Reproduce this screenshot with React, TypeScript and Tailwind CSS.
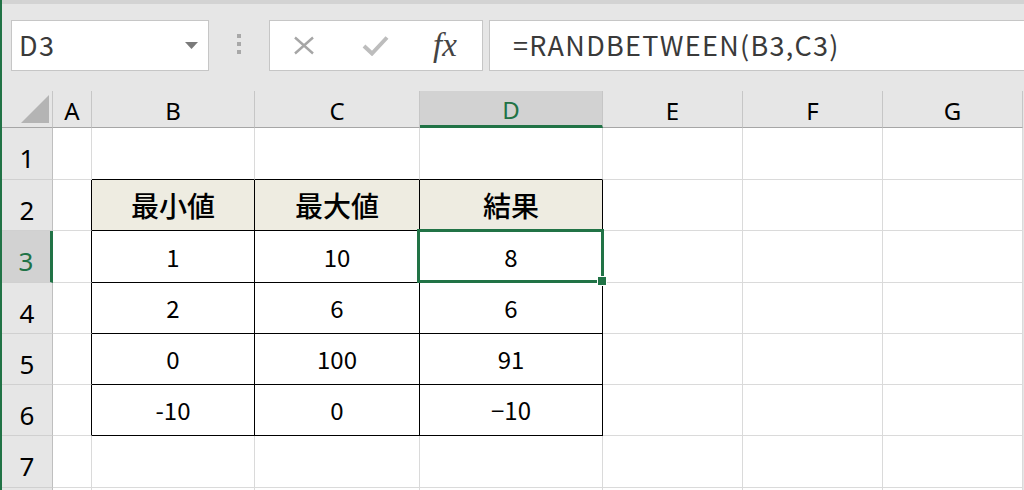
import React from 'react';

const COLS = ['A', 'B', 'C', 'D', 'E', 'F', 'G'];
const ROWS = [1, 2, 3, 4, 5, 6, 7, 8];

// table body B2:D6
const table: Record<number, string[]> = {
  2: ['最小値', '最大値', '結果'],
  3: ['1', '10', '8'],
  4: ['2', '6', '6'],
  5: ['0', '100', '91'],
  6: ['-10', '0', '−10'],
};

const cellFont = { fontFamily: '"Noto Sans CJK JP", "Noto Sans", sans-serif' };
const uiFont = { fontFamily: '"Noto Sans", "Liberation Sans", sans-serif' };

function Cell({ row, col }: { row: number; col: number }) {
  const inTable = row >= 2 && row <= 6 && col >= 1 && col <= 3;
  const isHead = row === 2 && inTable;
  const value = inTable ? table[row][col - 1] : '';

  let border = 'border-r border-b border-[#dadada]';
  if (inTable) border = 'border-r border-b border-black';
  else if (col === 0 && row >= 2 && row <= 6) border = 'border-r border-b border-r-black border-b-[#dadada]';
  else if (row === 1 && col >= 1 && col <= 3) border = 'border-r border-b border-r-[#dadada] border-b-black';

  return (
    <div
      className={`flex items-center justify-center text-black ${border} ${
        isHead ? 'bg-[#eeece1] text-[28px] font-medium' : 'bg-white text-[24px]'
      }`}
      style={cellFont}
    >
      {value}
    </div>
  );
}

export default function App() {
  return (
    <div className="w-[1024px] h-[490px] overflow-hidden border-l-2 border-[#217346] bg-[#e6e6e6]">
      <div className="h-[4px] bg-[#d3d3d3]" />

      {/* formula bar */}
      <div className="flex h-[87px] items-start pt-[16px]">
        <div className="ml-[9px] flex h-[51px] w-[198px] items-center justify-between border border-[#c6c6c6] bg-white pl-[7px] pr-[10px]">
          <span className="text-[27px] tracking-[1.5px] text-[#3a3a3a]" style={cellFont}>
            D3
          </span>
          <svg width="13" height="7" viewBox="0 0 13 7">
            <path d="M0 0 L13 0 L6.5 7 Z" fill="#7a7a7a" />
          </svg>
        </div>

        <div className="ml-[28px] mt-[14px] flex flex-col gap-[4px]">
          <span className="h-[4px] w-[4px] bg-[#a8a8a8]" />
          <span className="h-[4px] w-[4px] bg-[#a8a8a8]" />
          <span className="h-[4px] w-[4px] bg-[#a8a8a8]" />
        </div>

        <div className="ml-[28px] flex h-[51px] w-[214px] items-center border border-[#c6c6c6] bg-white">
          <svg className="ml-[23px]" width="22" height="19" viewBox="0 0 22 19">
            <path d="M2 1.5 L20 17.5 M20 1.5 L2 17.5" stroke="#a6a6a6" strokeWidth="2.4" />
          </svg>
          <svg className="ml-[47px]" width="27" height="21" viewBox="0 0 27 21">
            <path d="M2 11 L10 18.5 L25 2.5" stroke="#bdbdbd" strokeWidth="4" fill="none" />
          </svg>
          <span
            className="ml-[44px] text-[33px] italic text-[#444444] leading-none"
            style={{ fontFamily: '"Liberation Serif", serif' }}
          >
            fx
          </span>
        </div>

        <div className="ml-[6px] flex h-[51px] flex-1 items-center border border-r-0 border-[#c6c6c6] bg-white pl-[23px]">
          <span className="text-[27px] tracking-[1.3px] text-[#3a3a3a]" style={cellFont}>
            =RANDBETWEEN(B3,C3)
          </span>
        </div>
      </div>

      {/* sheet */}
      <div className="relative grid h-[399px] grid-cols-[51px_39px_163px_165px_183px_140px_140px_140px] grid-rows-[37px_52px_51px_52px_51px_51px_51px_52px_1fr]">
        <div className="flex items-end justify-end border-r border-b border-r-[#c6c6c6] border-b-[#a6a6a6] bg-[#e6e6e6] pr-[3px] pb-[4px]">
          <svg width="28" height="28" viewBox="0 0 28 28">
            <path d="M28 0 L28 28 L0 28 Z" fill="#b4b4b4" />
          </svg>
        </div>
        {COLS.map((c) => (
          <div
            key={c}
            className={`flex items-center justify-center pt-[3px] text-[24px] border-r border-r-[#c6c6c6] ${
              c === 'D'
                ? 'bg-[#d2d2d2] text-[#217346] border-b-[3px] border-b-[#217346]'
                : 'bg-[#e6e6e6] text-black border-b border-b-[#a6a6a6]'
            }`}
            style={uiFont}
          >
            {c}
          </div>
        ))}

        {ROWS.map((r) => (
          <React.Fragment key={r}>
            <div
              className={`flex items-center justify-center pt-[10px] text-[26px] border-b border-b-[#d0d0d0] ${
                r === 3
                  ? 'bg-[#d2d2d2] text-[#217346] border-r-[3px] border-r-[#217346]'
                  : 'bg-[#e6e6e6] text-black border-r border-r-[#bfbfbf]'
              }`}
              style={uiFont}
            >
              {r <= 7 ? r : ''}
            </div>
            {COLS.map((c, i) => (
              <Cell key={c} row={r} col={i} />
            ))}
          </React.Fragment>
        ))}

        {/* active cell D3 */}
        <div className="pointer-events-none absolute left-[415px] top-[138px] h-[54px] w-[187px] border-[3px] border-[#217346]" />
        <div className="pointer-events-none absolute left-[595px] top-[185px] h-[10px] w-[10px] border border-white bg-[#217346]" />
      </div>
    </div>
  );
}
